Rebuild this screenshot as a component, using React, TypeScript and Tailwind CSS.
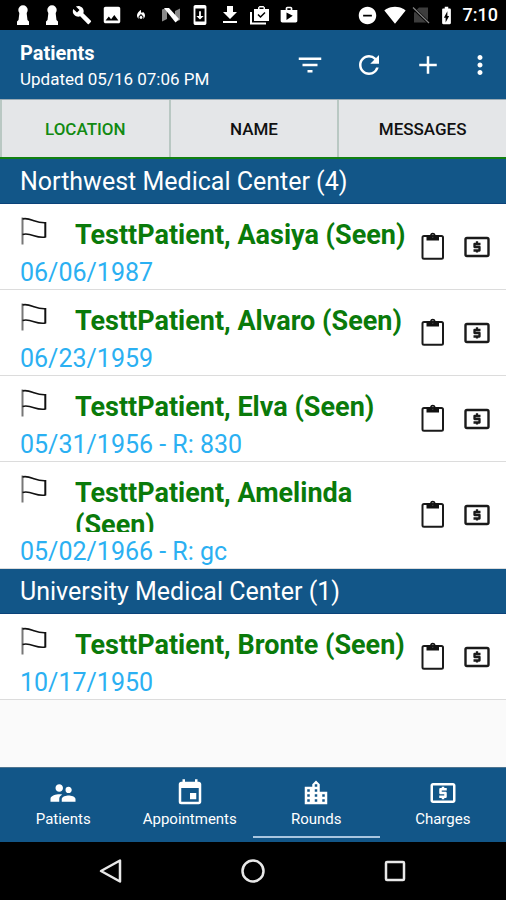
import { useState } from "react";
import {
  MdAdd,
  MdBatteryChargingFull,
  MdBuild,
  MdEvent,
  MdFileDownload,
  MdFilterList,
  MdImage,
  MdLocalAtm,
  MdLocalFireDepartment,
  MdLocationCity,
  MdMoreVert,
  MdRefresh,
  MdRemoveCircle,
  MdShop,
  MdSignalWifi4Bar,
  MdSupervisorAccount,
  MdSystemUpdate,
} from "react-icons/md";

interface Patient {
  name: string;
  details: string;
}

interface Facility {
  name: string;
  patients: Patient[];
}

const FACILITIES: Facility[] = [
  {
    name: "Northwest Medical Center",
    patients: [
      { name: "TesttPatient, Aasiya", details: "06/06/1987" },
      { name: "TesttPatient, Alvaro", details: "06/23/1959" },
      { name: "TesttPatient, Elva", details: "05/31/1956 - R: 830" },
      { name: "TesttPatient, Amelinda", details: "05/02/1966 - R: gc" },
    ],
  },
  {
    name: "University Medical Center",
    patients: [{ name: "TesttPatient, Bronte", details: "10/17/1950" }],
  },
];

const SORT_TABS = ["Location", "Name", "Messages"];

const NAV_ITEMS = [
  { label: "Patients", Icon: MdSupervisorAccount },
  { label: "Appointments", Icon: MdEvent },
  { label: "Rounds", Icon: MdLocationCity },
  { label: "Charges", Icon: MdLocalAtm },
];

function PawnIcon() {
  return (
    <svg viewBox="0 0 12 20" className="h-5 w-3" fill="currentColor">
      <circle cx="6" cy="5" r="4.7" />
      <path d="M2.500 7h7l1 8 1.500 1.500V20H0v-3.500L1.500 15z" />
    </svg>
  );
}

function NougatIcon() {
  return (
    <svg viewBox="0 0 20 16" className="h-4 w-5">
      <path d="M1 2.500 6 1v11L1 14.500zM14 4l5-2.500V13l-5 2z" fill="#8a8a8a" />
      <path d="M3 1h5l10 11-3.500 3.500z" fill="#fff" />
    </svg>
  );
}

function CheckedBagsIcon() {
  return (
    <svg viewBox="0 0 20 20" className="size-5">
      <path d="M1 7v11.500h15" fill="none" stroke="#fff" strokeWidth="2" />
      <path
        d="M4 4h4V2.500L9.500 1h4L15 2.500V4h4v12H4zM9.500 2.500V4h4V2.500z"
        fill="#fff"
        fillRule="evenodd"
      />
      <path d="m8 9.500 2.500 2.500 4.500-4.500" fill="none" stroke="#000" strokeWidth="1.500" />
    </svg>
  );
}

function NoSimIcon() {
  return (
    <svg viewBox="0 0 18 18" className="size-4.5">
      <path d="M7 1.500h9v15H2v-10z" fill="#3d3d3d" />
      <path d="m1 2 16 15" stroke="#000" strokeWidth="3" />
      <path d="m1 1.500 16 15.500" stroke="#858585" strokeWidth="1.200" />
    </svg>
  );
}

function FlagIcon() {
  return (
    <svg viewBox="0 0 28 28" className="size-7" fill="none">
      <path d="M2.500 0.500v27" stroke="#777" strokeWidth="2" />
      <path
        d="M2.500 2c4-1.200 8 .5 11.500 1.800s7 2.200 11.500 2"
        stroke="#111"
        strokeWidth="1.600"
      />
      <path
        d="M2.500 17.500c4-1.200 8 0 11.500 1.200s7 2 11.500 1.300"
        stroke="#111"
        strokeWidth="1.600"
      />
      <path d="M25.300 5v15.500" stroke="#111" strokeWidth="2" />
    </svg>
  );
}

function ClipboardIcon() {
  return (
    <svg viewBox="0 0 30 30" className="size-[30px]">
      <rect x="4.500" y="4" width="20.500" height="22.800" rx="1.500" fill="none" stroke="#1a1a1a" strokeWidth="2" />
      <path
        d="M8.500 3h3.500a2.900 2.900 0 0 1 5.600 0H21v5.500H8.500zM14.800 2.600a1.300 1.300 0 1 0 0 2.600 1.300 1.300 0 0 0 0-2.600z"
        fill="#111"
        fillRule="evenodd"
      />
    </svg>
  );
}

function CashIcon() {
  return (
    <svg viewBox="0 0 30 30" className="size-[30px]" fill="none" stroke="#1a1a1a">
      <rect x="3.500" y="6" width="23" height="18" rx="1.500" strokeWidth="2.400" />
      <path
        d="M18.500 12h-6v3h5v3.500h-6M15 9.300V12M15 18v2.500"
        strokeWidth="2.300"
        strokeLinejoin="round"
      />
    </svg>
  );
}

function StatusBar() {
  return (
    <div className="flex h-[30px] items-center justify-between bg-black pr-2 pl-2 text-white">
      <div className="grid w-[296px] grid-cols-10 items-center justify-items-center">
        <PawnIcon />
        <PawnIcon />
        <MdBuild className="size-5" />
        <MdImage className="size-[22px]" />
        <MdLocalFireDepartment className="size-3" />
        <NougatIcon />
        <MdSystemUpdate className="size-[22px]" />
        <MdFileDownload className="size-6" />
        <CheckedBagsIcon />
        <MdShop className="size-5" />
      </div>
      <div className="flex items-center gap-1.5">
        <MdRemoveCircle className="size-[21px]" />
        <MdSignalWifi4Bar className="size-[22px]" />
        <NoSimIcon />
        <MdBatteryChargingFull className="size-[21px]" />
        <span className="text-lg leading-5 font-medium">7:10</span>
      </div>
    </div>
  );
}

function AppBar() {
  return (
    <header className="flex h-[69px] items-center bg-[#125688] pl-5 text-white">
      <div className="flex-1 pt-0.5">
        <h1 className="text-xl leading-[26px] font-bold">Patients</h1>
        <p className="text-[17px] leading-[26px]">Updated 05/16 07:06 PM</p>
      </div>
      <div className="flex items-center">
        <button type="button" aria-label="Filter" className="flex w-[59px] justify-center">
          <MdFilterList className="size-[30px]" />
        </button>
        <button type="button" aria-label="Refresh" className="flex w-[59px] justify-center">
          <MdRefresh className="size-[30px]" />
        </button>
        <button type="button" aria-label="Add" className="flex w-[59px] justify-center">
          <MdAdd className="size-[30px]" />
        </button>
        <button type="button" aria-label="More" className="flex w-[49px] justify-center pr-1">
          <MdMoreVert className="size-[30px]" />
        </button>
      </div>
    </header>
  );
}

function PatientRow({ patient }: { patient: Patient }) {
  return (
    <li className="flex items-center border-b border-[#dcdcdc] bg-white pr-3.5 pl-5">
      <div className="min-w-0 flex-1 pt-[15px]">
        <div className="flex items-start gap-[27px]">
          <button type="button" aria-label={`Flag ${patient.name}`} className="-mt-0.5">
            <FlagIcon />
          </button>
          <h3 className="mb-1 max-h-[55px] min-h-[34px] flex-1 overflow-hidden text-[27px] leading-8 font-bold text-[#0a7a0a]">
            {patient.name} (Seen)
          </h3>
        </div>
        <p className="text-[25px] leading-8 text-[#2bb0f2]">{patient.details}</p>
      </div>
      <div className="flex items-center gap-3.5">
        <button type="button" aria-label="Notes">
          <ClipboardIcon />
        </button>
        <button type="button" aria-label="Charges">
          <CashIcon />
        </button>
      </div>
    </li>
  );
}

export default function App() {
  const [sortBy, setSortBy] = useState("Location");
  const [section, setSection] = useState("Rounds");

  return (
    <div className="flex min-h-screen flex-col bg-[#fafafa] font-[Roboto,sans-serif] text-black">
      <StatusBar />
      <AppBar />

      <div className="grid h-[60px] grid-cols-3 border-t border-b-2 border-t-[#9aabb5] border-b-[#128012] bg-[#e4e6e8]">
        {SORT_TABS.map((tab) => (
          <button
            key={tab}
            type="button"
            onClick={() => setSortBy(tab)}
            className={`border-l-2 border-[#b9c8c3] pt-0.5 text-[17px] font-medium uppercase ${
              sortBy === tab ? "text-[#128a12]" : "text-[#111]"
            }`}
          >
            {tab}
          </button>
        ))}
      </div>

      <main className="flex-1">
        {FACILITIES.map((facility) => (
          <section key={facility.name}>
            <h2 className="h-[45px] border-b border-[#0b4379] bg-[#125688] pl-5 text-[25px] leading-[46px] text-white">
              {facility.name} ({facility.patients.length})
            </h2>
            <ul>
              {facility.patients.map((p) => (
                <PatientRow key={p.name} patient={p} />
              ))}
            </ul>
          </section>
        ))}
      </main>

      <nav className="grid h-[75px] grid-cols-4 border-t border-[#4e7590] bg-[#125688] text-white">
        {NAV_ITEMS.map(({ label, Icon }) => (
          <button
            key={label}
            type="button"
            onClick={() => setSection(label)}
            className={`mb-1 flex flex-col items-center border-b-2 pt-2.5 ${
              section === label ? "border-[#a9c6e0]" : "border-transparent"
            }`}
          >
            <Icon className="size-[30px]" />
            <span className="text-[15px] leading-[22px]">{label}</span>
          </button>
        ))}
      </nav>

      <div className="flex h-[58px] items-center justify-center gap-[114px] bg-black text-[#e8e8e8]">
        <button type="button" aria-label="Back">
          <svg viewBox="0 0 28 28" className="size-7" fill="none" stroke="currentColor" strokeWidth="2.500">
            <path d="M23 3.500v21L4 14z" strokeLinejoin="round" />
          </svg>
        </button>
        <button type="button" aria-label="Home">
          <svg viewBox="0 0 28 28" className="size-7" fill="none" stroke="currentColor" strokeWidth="2.500">
            <circle cx="14" cy="14" r="10.500" />
          </svg>
        </button>
        <button type="button" aria-label="Recent apps">
          <svg viewBox="0 0 28 28" className="size-7" fill="none" stroke="currentColor" strokeWidth="2.500">
            <rect x="5" y="5" width="18" height="18" rx="1" />
          </svg>
        </button>
      </div>
    </div>
  );
}
